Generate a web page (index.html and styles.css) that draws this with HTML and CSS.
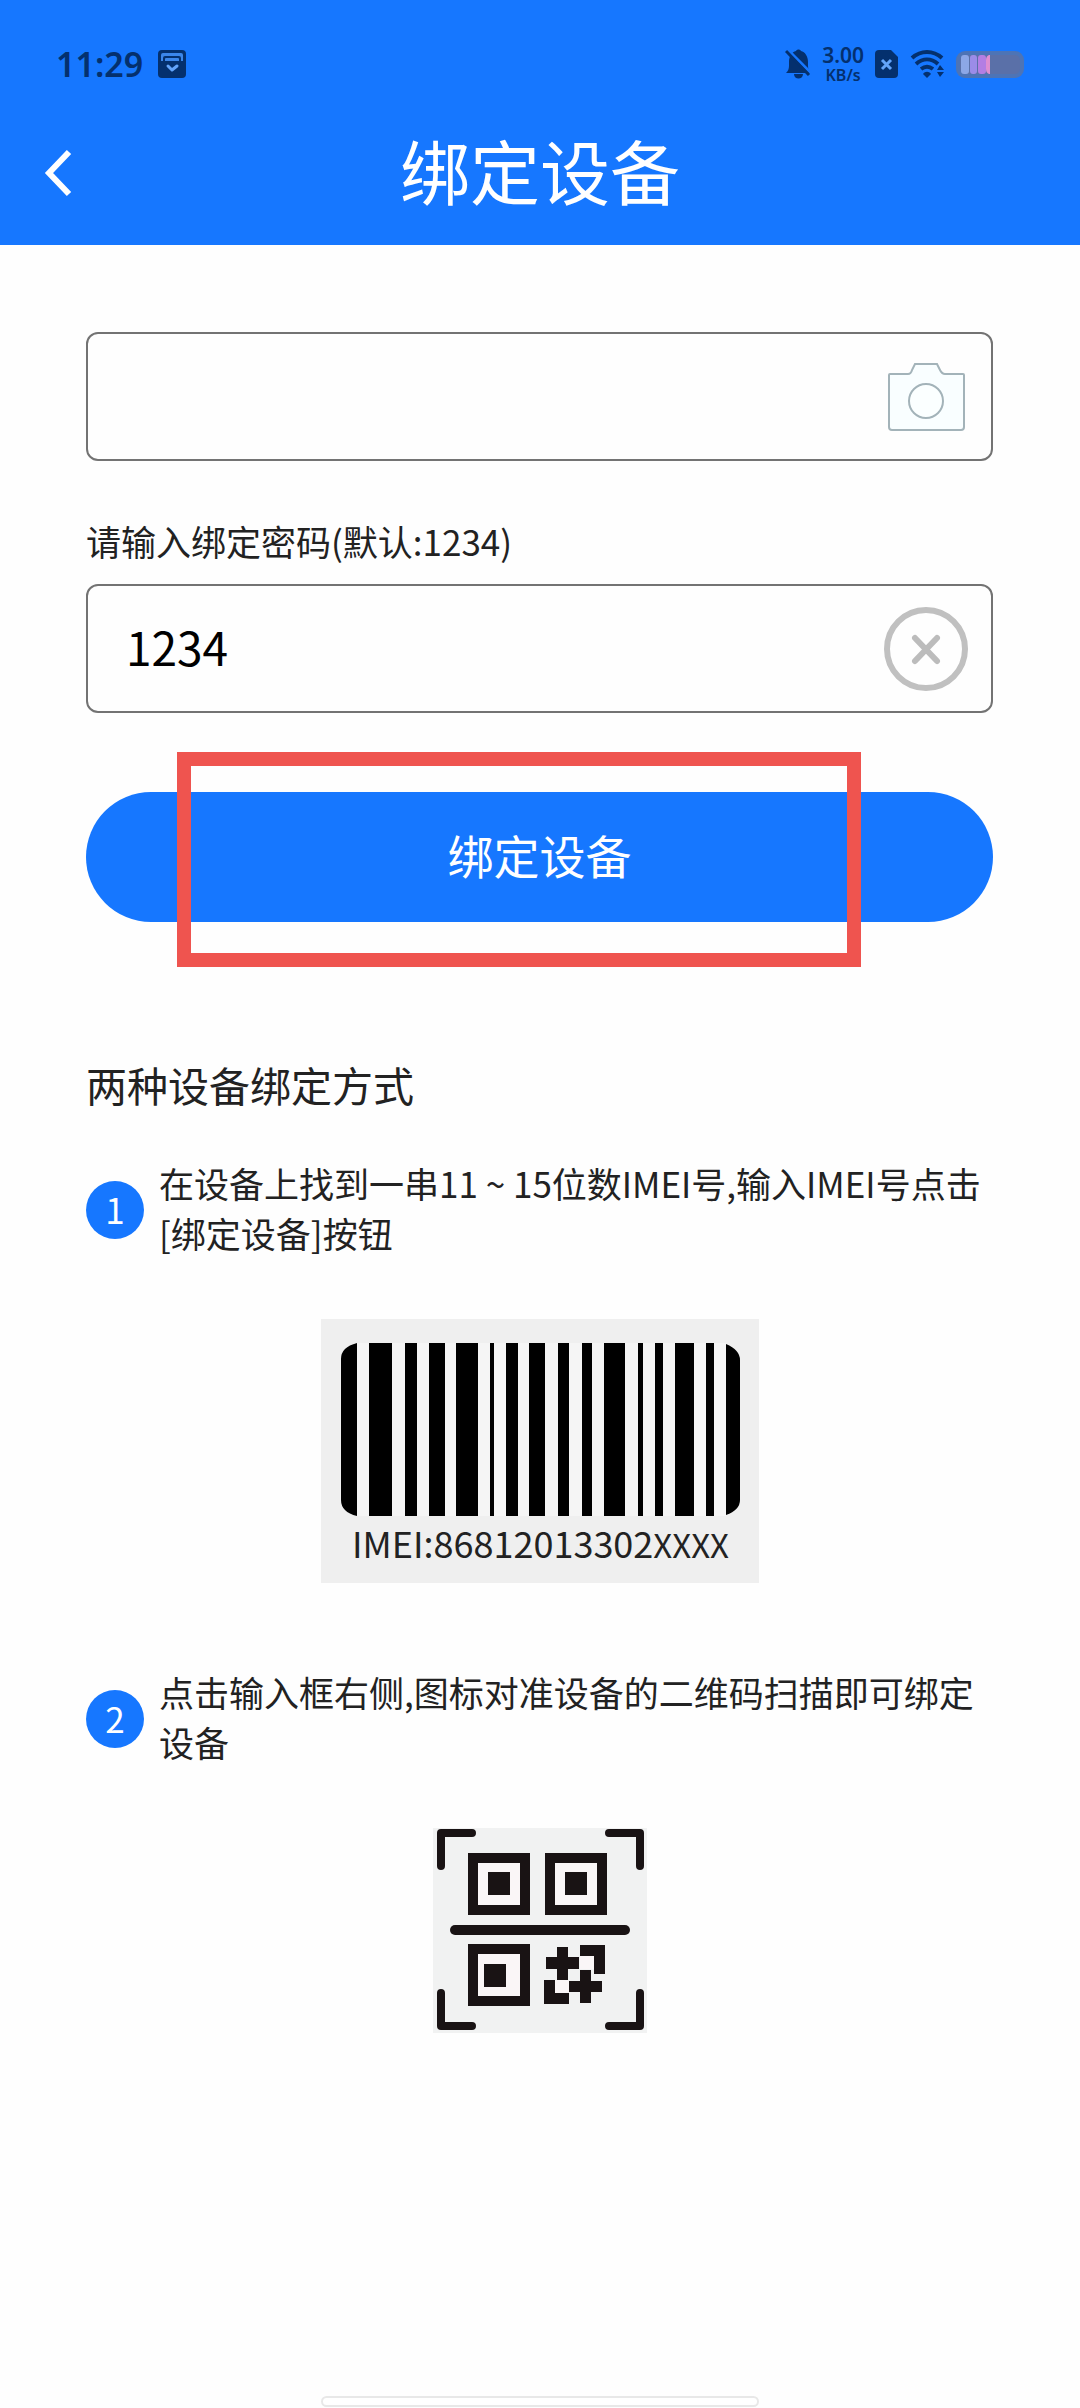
FILE: index.html
```html
<!DOCTYPE html>
<html lang="zh-CN">
<head>
<meta charset="utf-8">
<meta name="viewport" content="width=device-width, initial-scale=1">
<title>绑定设备</title>
<link rel="stylesheet" href="styles.css">
</head>
<body>
<div class="page">
  <header class="header">
    <div class="status">
      <div class="status-group status-left">
        <span class="time">11:29</span>
        <svg class="icon" width="28" height="28" viewBox="0 0 28 28" aria-hidden="true">
          <rect width="28" height="28" rx="4" fill="#04306e"/>
          <path d="M3 11V5a2 2 0 0 1 2-2h18a2 2 0 0 1 2 2v6h-2V8a2 2 0 0 0-2-2H7a2 2 0 0 0-2 2v3z" fill="#3b86ea"/>
          <path d="M7 11V9a1 1 0 0 1 1-1h12a1 1 0 0 1 1 1v2z" fill="#3b86ea"/>
          <path d="M10 16l4 4 5-4" fill="none" stroke="#63a4fa" stroke-width="3" stroke-linecap="round" stroke-linejoin="round"/>
        </svg>
      </div>
      <div class="status-group">
        <svg class="icon" width="26" height="30" viewBox="0 0 26 30" aria-hidden="true">
          <path d="M1 24c2-2 3-4 3-7v-4C4 7 7 3 11 2c1-2 4-2 5 0 4 1 7 5 7 11v4c0 3 1 5 2 7zM9 25h9c0 6-9 6-9 0z" fill="#04306e"/>
          <path d="M3 1l23 23" stroke="#1677ff" stroke-width="3"/>
          <path d="M1 2l23 24" stroke="#04306e" stroke-width="3"/>
        </svg>
        <span class="speed"><span class="speed-value">3.00</span><span class="speed-unit">KB/s</span></span>
        <svg class="icon" width="24" height="28" viewBox="0 0 24 28" aria-hidden="true">
          <path d="M4 0h12l7 7v17a4 4 0 0 1-4 4H4a4 4 0 0 1-4-4V4a4 4 0 0 1 4-4z" fill="#04306e"/>
          <path d="M7 10l9 9M16 10l-9 9" stroke="#63a4fa" stroke-width="3"/>
        </svg>
        <svg class="icon" width="35" height="28" viewBox="0 0 35 28" aria-hidden="true">
          <path d="M2 8c9-8 21-8 30 0M6 14c7-6 15-6 22 0M11 19c4-3 8-3 12 0" fill="none" stroke="#04306e" stroke-width="4"/>
          <path d="M13 24c2-3 6-3 8 0l-4 4z" fill="#04306e"/>
          <path d="M27 20l3-5 4 5zM27 22h7l-4 5z" fill="#04306e"/>
        </svg>
        <svg class="icon" width="68" height="27" viewBox="0 0 68 27" aria-hidden="true">
          <rect width="68" height="27" rx="9" fill="#4d74b6"/>
          <rect x="4" y="4" width="60" height="19" rx="5" fill="#5a70a8"/>
          <rect x="5" y="4" width="8" height="19" rx="3" fill="#8ca7e6"/>
          <rect x="14" y="4" width="7" height="19" rx="3" fill="#9b8ce8"/>
          <rect x="22" y="4" width="8" height="19" rx="3" fill="#b37ee3"/>
          <path d="M34 4h-1q-3 1-3 5v9q0 4 3 5h1z" fill="#df8ed0"/>
        </svg>
      </div>
    </div>
    <nav class="nav">
      <button class="back" type="button" aria-label="返回">
        <svg class="icon" width="30" height="48" viewBox="0 0 30 48" aria-hidden="true">
          <path d="M27 3L7 24l20 21" fill="none" stroke="#fff" stroke-width="6"/>
        </svg>
      </button>
      <h1 class="title">绑定设备</h1>
    </nav>
  </header>

  <main class="content">
    <form>
      <div class="field">
        <input class="input" type="text" aria-label="IMEI号">
        <button class="field-button" type="button" aria-label="扫描二维码">
          <svg class="icon" width="84" height="84" viewBox="0 0 84 84" aria-hidden="true">
            <path d="M5 20q0-1 1-1h18q3 0 4-4l3-6h22l3 6q2 4 5 4h18q1 0 1 1v52q0 3-3 3H8q-3 0-3-3z" fill="#f9feff" stroke="#a3b3b9" stroke-width="2"/>
            <circle cx="42" cy="46" r="17" fill="#fbffff" stroke="#a3b3b9" stroke-width="2"/>
          </svg>
        </button>
      </div>
      <label class="label" for="password">请输入绑定密码(默认:1234)</label>
      <div class="field">
        <input class="input" id="password" type="text" value="1234">
        <button class="field-button" type="button" aria-label="清除">
          <svg class="icon" width="84" height="84" viewBox="0 0 84 84" aria-hidden="true">
            <circle cx="42" cy="42" r="39" fill="none" stroke="#c0c0c0" stroke-width="6"/>
            <path d="M31 31l22 23M53 31L31 54" stroke="#bcbcbc" stroke-width="6" stroke-linecap="round"/>
          </svg>
        </button>
      </div>
      <div class="submit-area">
        <button class="submit" type="submit">绑定设备</button>
        <div class="highlight"></div>
      </div>
    </form>

    <h2 class="subtitle">两种设备绑定方式</h2>
    <section class="step">
      <span class="number">1</span>
      <p class="step-text">在设备上找到一串11 ~ 15位数IMEI号,输入IMEI号点击[绑定设备]按钮</p>
    </section>
    <svg class="figure" width="438" height="264" viewBox="0 0 438 264" role="img" aria-label="IMEI条形码">
      <rect width="438" height="264" fill="#efefef"/>
      <rect x="36" y="24" width="369" height="173" fill="#f5f5f5"/>
      <path d="M36 24v173q-16-4-16-16V40q0-12 16-16zM48 24h23v173H48zM84 24h12v173H84zM108 24h16v173h-16zM135 24h22v173h-22zM169 24h4v173h-4zM185 24h12v173h-12zM208 24h16v173h-16zM237 24h11v173h-11zM261 24h10v173h-10zM283 24h21v173h-21zM317 24h5v173h-5zM334 24h8v173h-8zM354 24h19v173h-19zM385 24h8v173h-8zM405 25q14 6 14 16v140q0 10-14 15z"/>
      <text class="imei" x="31" y="239">IMEI:86812013302<tspan class="imei-mask">XXXX</tspan></text>
    </svg>
    <section class="step step-next">
      <span class="number">2</span>
      <p class="step-text">点击输入框右侧,图标对准设备的二维码扫描即可绑定设备</p>
    </section>
    <svg class="figure" width="214" height="205" viewBox="0 0 214 205" role="img" aria-label="二维码">
      <rect width="214" height="205" fill="#f1f2f2"/>
      <g fill="none" stroke="#191314" stroke-width="8" stroke-linecap="round" stroke-linejoin="round">
        <path d="M8 38V5h31M176 5h31v33M8 165v33h31M176 198h31v-33"/>
        <path d="M22 102h170" stroke-width="10"/>
      </g>
      <g fill="#faf6f7" stroke="#191314" stroke-width="10">
        <path d="M40 30h52v52H40zM117 30h52v52h-52zM40 121h52v52H40z"/>
      </g>
      <path d="M147 128h14v13h-14zM122 152h14v13h-14z" fill="#faf6f7"/>
      <path d="M55 44h22v23H55zM132 44h22v23h-22zM51 136h22v23H51zM124 119h11v10h11v12h-11v11h-11v-11h-11v-12h11zM147 117h25v29h-11v-18h-14zM111 152h11v13h14v11h-25zM147 142h11v11h11v11h-11v11h-11v-11h-11v-11h11z" fill="#191314"/>
    </svg>
  </main>
  <div class="home-bar"></div>
</div>
</body>
</html>
```
FILE: styles.css
```css
* {
  box-sizing: border-box;
}

body {
  margin: 0;
  background: #fefefe;
  color: #222;
  font-family: "Noto Sans CJK SC", sans-serif;
}

h1, h2, p {
  margin: 0;
  font-weight: 400;
}

button, input {
  padding: 0;
  border: 0;
  background: none;
  font-family: inherit;
}

.page {
  display: flex;
  flex-direction: column;
  min-height: 100vh;
}

.icon {
  display: block;
  flex: none;
}

.header {
  background: #1677ff;
  color: #fff;
}

.status {
  display: flex;
  justify-content: space-between;
  align-items: center;
  height: 100px;
  padding: 28px 56px 0;
  color: #04306e;
  font-family: "Noto Sans", "Noto Sans CJK SC", sans-serif;
  font-weight: 600;
}

.status-group {
  display: flex;
  align-items: center;
  gap: 11px;
}

.status-left {
  gap: 15px;
}

.time {
  font-size: 34px;
  line-height: 40px;
}

.speed {
  display: flex;
  flex-direction: column;
  align-items: center;
}

.speed-value {
  font-size: 21px;
  line-height: 22px;
}

.speed-unit {
  font-size: 16px;
  line-height: 18px;
}

.nav {
  display: grid;
  grid-template-columns: 72px 1fr 72px;
  align-items: center;
  height: 145px;
}

.back {
  justify-self: end;
}

.title {
  padding-bottom: 6px;
  font-size: 70px;
  line-height: 100px;
  text-align: center;
}

.content {
  padding: 87px 87px 0 86px;
}

.field {
  display: flex;
  align-items: center;
  height: 129px;
  padding: 0 23px 0 38px;
  border: 2px solid #737373;
  border-radius: 12px;
}

.input {
  flex: 1;
  min-width: 0;
  height: 100%;
  padding-bottom: 6px;
  color: #000;
  font-size: 46px;
  outline: none;
}

.label {
  display: block;
  margin: 55px 0 18px;
  font-size: 35px;
  line-height: 50px;
}

.submit-area {
  position: relative;
  margin-top: 79px;
}

.submit {
  display: block;
  width: 100%;
  height: 130px;
  padding-bottom: 6px;
  border-radius: 65px;
  background: #1677ff;
  color: #fff;
  font-size: 46px;
}

/* Marks the button the guide tells the reader to press. */
.highlight {
  position: absolute;
  inset: -40px 132px -45px 91px;
  border: 14px solid #ef544f;
  pointer-events: none;
}

.subtitle {
  margin: 132px 0 44px;
  font-size: 41px;
  line-height: 60px;
}

.step {
  display: flex;
  align-items: center;
  gap: 15px;
}

.step-next {
  margin-top: 84px;
}

.number {
  flex: none;
  width: 58px;
  height: 58px;
  border-radius: 50%;
  background: #1677ff;
  color: #fff;
  font-size: 35px;
  line-height: 56px;
  text-align: center;
}

.step-text {
  padding-bottom: 4px;
  font-size: 35px;
  line-height: 50px;
}

.figure {
  display: block;
  margin: 57px auto 0;
}

.imei {
  fill: #222;
  font-size: 36px;
}

.imei-mask {
  font-size: 33px;
}

.home-bar {
  width: 438px;
  height: 11px;
  margin: auto auto 1px;
  border: 2px solid #e8e8e8;
  border-radius: 6px;
  background: #fff;
}
```
